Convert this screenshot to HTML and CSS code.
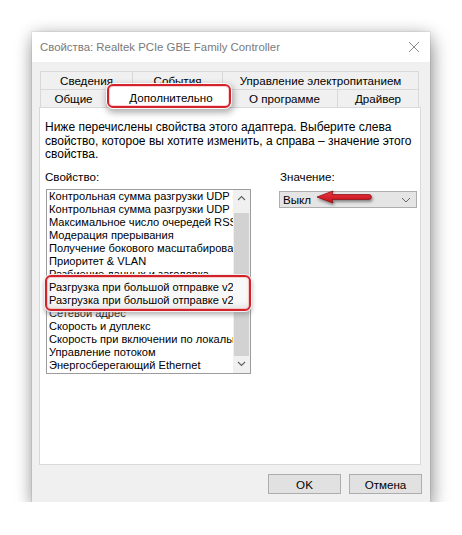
FILE: index.html
```html
<!DOCTYPE html>
<html lang="ru">
<head>
<meta charset="utf-8">
<title>Свойства</title>
<link rel="stylesheet" href="styles.css">
</head>
<body>
<div class="window">
  <div class="titlebar">
    <span class="title">Свойства: Realtek PCIe GBE Family Controller</span>
    <svg class="close" width="12" height="12" viewBox="0 0 12 12"><path d="M1 1L11 11M11 1L1 11" stroke="#8c8c8c" stroke-width="1" fill="none"/></svg>
  </div>
  <div class="content">
    <div class="tabs">
      <div class="tabrow back">
        <div class="tab">Сведения</div>
        <div class="tab">События</div>
        <div class="tab">Управление электропитанием</div>
      </div>
      <div class="tabrow front">
        <div class="tab">Общие</div>
        <div class="tab selected"><span>Дополнительно</span></div>
        <div class="tab">О программе</div>
        <div class="tab">Драйвер</div>
      </div>
    </div>
    <div class="panel">
      <p class="desc">Ниже перечислены свойства этого адаптера. Выберите слева<br>свойство, которое вы хотите изменить, а справа – значение этого<br>свойства.</p>
      <div class="fields">
        <div class="prop">
          <div class="label">Свойство:</div>
          <div class="listbox">
            <div class="items">
              <div class="item">Контрольная сумма разгрузки UDP (IPv4)</div>
              <div class="item">Контрольная сумма разгрузки UDP (IPv6)</div>
              <div class="item">Максимальное число очередей RSS</div>
              <div class="item">Модерация прерывания</div>
              <div class="item">Получение бокового масштабирования</div>
              <div class="item">Приоритет &amp; VLAN</div>
              <div class="item">Разбиение данных и заголовка</div>
              <div class="marked">
                <div class="item">Разгрузка при большой отправке v2 (IPv4)</div>
                <div class="item">Разгрузка при большой отправке v2 (IPv6)</div>
              </div>
              <div class="item">Сетевой адрес</div>
              <div class="item">Скорость и дуплекс</div>
              <div class="item">Скорость при включении по локальной сети</div>
              <div class="item">Управление потоком</div>
              <div class="item">Энергосберегающий Ethernet</div>
            </div>
            <div class="scrollbar">
              <div class="sbtn"><svg width="9" height="6" viewBox="0 0 9 6"><path d="M1 5L4.5 1.5L8 5" stroke="#606060" stroke-width="1.1" fill="none"/></svg></div>
              <div class="track"><div class="thumb"></div></div>
              <div class="sbtn"><svg width="9" height="6" viewBox="0 0 9 6"><path d="M1 1L4.5 4.5L8 1" stroke="#606060" stroke-width="1.1" fill="none"/></svg></div>
            </div>
          </div>
        </div>
        <div class="value">
          <div class="label">Значение:</div>
          <div class="select">
            <span>Выкл</span>
            <svg width="10" height="6" viewBox="0 0 10 6"><path d="M1 1L5 5L9 1" stroke="#666" stroke-width="1" fill="none"/></svg>
          </div>
        </div>
      </div>
    </div>
    <div class="buttons">
      <div class="btn">OK</div>
      <div class="btn">Отмена</div>
    </div>
  </div>
  <svg class="arrow" width="64" height="22" viewBox="0 0 64 22">
    <defs>
      <filter id="sh" x="-20%" y="-40%" width="140%" height="200%">
        <feDropShadow dx="1" dy="2" stdDeviation="1.4" flood-color="#000" flood-opacity="0.45"/>
      </filter>
      <linearGradient id="rg" x1="0" y1="0" x2="0" y2="1">
        <stop offset="0" stop-color="#ec3a40"/>
        <stop offset="1" stop-color="#c3111c"/>
      </linearGradient>
    </defs>
    <path d="M3 8 L19 2 L18 5.6 L55 5.6 A2.4 2.4 0 0 1 55 10.4 L18 10.4 L19 14 Z" fill="url(#rg)" stroke="#8b0d12" stroke-width="0.8" stroke-linejoin="round" filter="url(#sh)"/>
  </svg>
</div>
</body>
</html>
```

FILE: styles.css
```css
* { box-sizing: border-box; }

html, body {
  margin: 0;
  padding: 0;
  background: #ffffff;
}

body {
  font-family: "Liberation Sans", Arial, sans-serif;
  font-size: 11.6px;
  color: #000;
}

.window {
  position: relative;
  margin: 32px 0 0 32px;
  width: 398px;
  height: 470px;
  background: #f0f0f0;
  box-shadow: 0 0 0 1px rgba(0, 0, 0, 0.06), 0 0 14px rgba(0, 0, 0, 0.18), 2px 9px 18px rgba(0, 0, 0, 0.35);
}

.titlebar {
  height: 30px;
  background: #ffffff;
  display: flex;
  align-items: center;
  justify-content: space-between;
  padding: 0 10px 0 8px;
}

.title {
  color: #7a7a7a;
  font-size: 11.4px;
}

.close {
  display: block;
}

.content {
  padding: 9px 9px 0 7px;
}

.tabs {
  margin-left: 1px;
  width: 379px;
}

.tabrow {
  display: grid;
  height: 18px;
}

.tabrow.back {
  grid-template-columns: 93px 90px 196px;
}

.tabrow.front {
  grid-template-columns: 67px 125px 106px 81px;
}

.tab {
  border-top: 1px solid #d9d9d9;
  border-right: 1px solid #d9d9d9;
  display: flex;
  align-items: center;
  justify-content: center;
  line-height: 13px;
  white-space: nowrap;
  background: #f0f0f0;
}

.tab:first-child {
  border-left: 1px solid #d9d9d9;
}

.tab.selected {
  position: relative;
  z-index: 2;
  background: #ffffff;
  border-color: transparent;
  padding-left: 4px;
  padding-bottom: 2px;
}

.tab.selected::before {
  content: "";
  position: absolute;
  z-index: -1;
  top: -6px;
  bottom: -1px;
  left: 0;
  right: 0;
  background: #ffffff;
  border: 2px solid #d2222c;
  border-radius: 6px;
  box-shadow: inset 0 0 0 1px rgba(255, 150, 150, 0.45), 0 0 0 1px rgba(255, 255, 255, 0.9), 1px 3px 6px 2px rgba(0, 0, 0, 0.3);
}

.panel {
  width: 382px;
  height: 358px;
  background: #ffffff;
  border: 1px solid #d9d9d9;
  padding: 13px 0 0 5px;
}

.desc {
  margin: 0;
  font-size: 12px;
  line-height: 13.5px;
  white-space: nowrap;
}

.fields {
  display: flex;
  align-items: flex-start;
  margin-top: 8px;
  gap: 28px;
}

.label {
  line-height: 13px;
}

.prop {
  width: 206px;
}

.listbox {
  margin: 6px 0 0 1px;
  width: 205px;
  height: 185px;
  border: 1px solid #9c9c9c;
  display: flex;
  background: #ffffff;
}

.items {
  flex: 1;
  min-width: 0;
  font-size: 11.1px;
}

.item {
  line-height: 13px;
  padding-left: 2px;
  white-space: nowrap;
  overflow: hidden;
}

.marked {
  position: relative;
  z-index: 1;
}

.marked::before {
  content: "";
  position: absolute;
  z-index: -1;
  top: -6px;
  bottom: -4px;
  left: -2px;
  right: -18px;
  background: #f8f8f8;
  border: 2px solid #d2222c;
  border-radius: 6px;
  box-shadow: inset 0 0 0 1px rgba(255, 150, 150, 0.45), inset 0 -4px 5px rgba(0, 0, 0, 0.07), 0 0 0 1px #f0f0f0, 0 3px 4px 1px rgba(140, 140, 140, 0.6);
}

.scrollbar {
  width: 17px;
  display: flex;
  flex-direction: column;
  background: #f0f0f0;
}

.sbtn {
  height: 17px;
  display: flex;
  align-items: center;
  justify-content: center;
}

.sbtn svg {
  display: block;
}

.track {
  flex: 1;
  padding: 6px 1px 0 1px;
  display: flex;
  flex-direction: column;
}

.thumb {
  flex: 1;
  background: #d2d2d2;
}

.value {
  width: 138px;
}

.value .label {
  margin-left: 1px;
}

.select {
  margin-top: 8.5px;
  height: 17px;
  background: #e5e5e5;
  border: 1px solid #adadad;
  display: flex;
  align-items: center;
  justify-content: space-between;
  padding: 0 5px 0 3px;
}

.select svg {
  display: block;
}

.buttons {
  display: flex;
  justify-content: flex-end;
  gap: 8px;
  margin-top: 9px;
  margin-right: -1px;
}

.btn {
  width: 73px;
  height: 20px;
  background: #e1e1e1;
  border: 1px solid #adadad;
  display: flex;
  align-items: center;
  justify-content: center;
  font-size: 11.6px;
}

.arrow {
  position: absolute;
  left: 282px;
  top: 157px;
  display: block;
}
```
